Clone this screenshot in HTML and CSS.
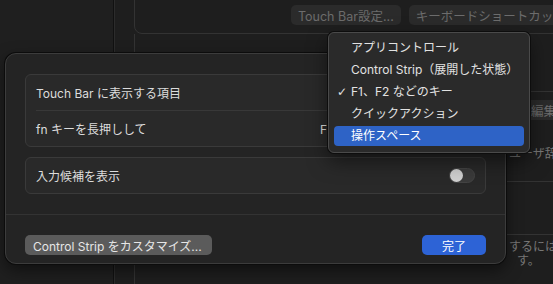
FILE: index.html
```html
<!DOCTYPE html>
<html lang="ja">
<head>
  <meta charset="UTF-8">
  <meta name="viewport" content="width=device-width, initial-scale=1.0">
  <title>キーボード</title>
  <link rel="stylesheet" href="styles.css">
</head>
<body>

  <!-- Background window -->
  <div class="window">
    <aside class="sidebar"></aside>
    <main class="main">
      <div class="toolbar-box">
        <button class="ghost-btn">Touch Bar設定...</button>
        <button class="ghost-btn">キーボードショートカット...</button>
      </div>
      <div class="detail">
        <div class="detail-line first"></div>
        <button class="ghost-btn edit">編集...</button>
        <div class="detail-text dict">ユーザ辞書</div>
        <div class="detail-line"></div>
        <div class="detail-line low"></div>
        <div class="detail-text note">するには、<br><span class="indent">す。</span></div>
      </div>
    </main>
  </div>

  <!-- Sheet -->
  <div class="sheet">
    <div class="group">
      <div class="row">
        <span>Touch Bar に表示する項目</span>
      </div>
      <div class="row">
        <span>fn キーを長押しして</span>
        <span class="value">F1、F2 などのキー</span>
      </div>
    </div>

    <div class="group">
      <div class="row">
        <span>入力候補を表示</span>
        <span class="toggle"><span class="knob"></span></span>
      </div>
    </div>

    <div class="sheet-footer">
      <button class="btn">Control Strip をカスタマイズ...</button>
      <button class="btn primary">完了</button>
    </div>
  </div>

  <!-- Popup menu -->
  <ul class="menu">
    <li>アプリコントロール</li>
    <li>Control Strip（展開した状態）</li>
    <li class="checked">F1、F2 などのキー</li>
    <li>クイックアクション</li>
    <li class="active">操作スペース</li>
  </ul>

</body>
</html>
```

FILE: styles.css
```css
* {
  box-sizing: border-box;
  margin: 0;
  padding: 0;
}

body {
  font-family: Inter, "Noto Sans CJK JP", sans-serif;
  font-size: 12px;
  background-color: #1e1e1e;
  color: #dcdcdc;
  width: 553px;
  height: 284px;
  overflow: hidden;
  position: relative;
}

button {
  font-family: inherit;
  font-size: 12px;
  border: none;
}

/* background window */

.window {
  display: flex;
  height: 284px;
}

.sidebar {
  width: 114px;
  flex-shrink: 0;
  border-right: 1px solid #111;
  background-color: #1f1f1f;
}

.main {
  flex: 1;
  padding-left: 19px;
  position: relative;
  overflow: hidden;
  border-left: 1px solid #2c2c2c;
}

.toolbar-box {
  margin-top: -12px;
  height: 46px;
  width: 520px;
  border: 1px solid #333;
  border-radius: 8px;
  display: flex;
  gap: 8px;
  padding: 16px 0 0 156px;
}

.ghost-btn {
  height: 20px;
  padding: 0 7px;
  background-color: #2b2b2b;
  color: #6c6c6c;
  border-radius: 5px;
  white-space: nowrap;
  font-size: 12.5px;
}

.detail {
  padding-left: 372px;
  height: 250px;
  display: flex;
  flex-direction: column;
  align-items: flex-start;
  border-left: 1px solid #333;
}

.detail-line {
  width: 60px;
  border-top: 1px solid #333;
  margin-top: 20px;
}

.detail-line.first {
  margin-top: 57px;
  margin-left: 22px;
}

.edit {
  margin: 8px 0 0 17px;
}

.detail-text {
  color: #777;
  white-space: nowrap;
}

.dict {
  margin: 24px 0 0 2px;
}

.detail-line.low {
  margin-top: 52px;
}

.note {
  margin-top: 5px;
  line-height: 14px;
  padding-left: 2px;
}

.indent {
  padding-left: 8px;
}

/* sheet */

.sheet {
  position: absolute;
  left: 5px;
  top: 53px;
  width: 501px;
  height: 211px;
  background-color: #242424;
  border: 1px solid #3c3c3c;
  border-radius: 11px;
  box-shadow: 0 0 0 1px #0c0c0c, 0 6px 16px rgba(0, 0, 0, 0.5);
  padding: 20px 19px 0;
}

.group {
  background-color: #292929;
  border: 1px solid #3a3a3a;
  border-radius: 6px;
  margin-bottom: 10px;
}

.row {
  height: 35px;
  display: flex;
  align-items: center;
  justify-content: space-between;
  padding: 0 10px;
  position: relative;
}

.row + .row::before {
  content: "";
  position: absolute;
  left: 10px;
  right: 10px;
  top: 0;
  border-top: 1px solid #383838;
}

.group .row + .row {
  height: 36px;
}

.value {
  width: 155px;
  color: #dcdcdc;
}

.toggle {
  width: 26px;
  height: 15px;
  border-radius: 8px;
  background-color: #3a3a3a;
  border: 1px solid #444;
  display: flex;
  align-items: center;
}

.knob {
  width: 13px;
  height: 13px;
  border-radius: 50%;
  background-color: #cfcfcf;
}

.sheet-footer {
  margin: 20px -19px 0;
  border-top: 1px solid #333;
  padding: 20px 19px 0;
  display: flex;
  justify-content: space-between;
}

.btn {
  height: 20px;
  border-radius: 5px;
  background-color: #5b5b5b;
  color: #e6e6e6;
  padding: 0 10px 0 8px;
  white-space: nowrap;
}

.btn.primary {
  width: 64px;
  padding: 0;
  background-color: #2d63d6;
  color: #fff;
}

/* popup menu */

.menu {
  position: absolute;
  left: 328px;
  top: 32px;
  width: 202px;
  height: 121px;
  list-style: none;
  background-color: #2a2a2a;
  border: 1px solid #4a4a4a;
  border-radius: 6px;
  box-shadow: 0 0 0 1px #0d0d0d, 0 8px 20px rgba(0, 0, 0, 0.5);
  padding: 4px 5px;
}

.menu li {
  height: 22px;
  line-height: 22px;
  padding-left: 17px;
  color: #e2e2e2;
  border-radius: 4px;
  position: relative;
  white-space: nowrap;
}

.menu li.checked::before {
  content: "✓";
  position: absolute;
  left: 3px;
  top: 0;
  font-family: "DejaVu Sans", sans-serif;
  font-size: 12px;
}

.menu li.active {
  background-color: #2e63c6;
  color: #fff;
  height: 20px;
  line-height: 20px;
  margin-top: 1px;
}
```
